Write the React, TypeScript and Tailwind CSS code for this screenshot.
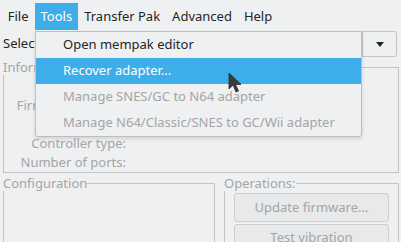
import React from "react";

const menuBar = ["File", "Tools", "Transfer Pak", "Advanced", "Help"];

const toolsMenu = [
  { label: "Open mempak editor", disabled: false, active: false },
  { label: "Recover adapter...", disabled: false, active: true },
  { label: "Manage SNES/GC to N64 adapter", disabled: true, active: false },
  { label: "Manage N64/Classic/SNES to GC/Wii adapter", disabled: true, active: false },
];

const infoRows = ["", "Firmware version:", "", "Controller type:", "Number of ports:"];

const GroupHeader = ({ title }: { title: string }) => (
  <div className="flex h-[16px] items-stretch">
    <span className="leading-[16px] text-[#a4a5a6]">{title}</span>
    <div className="mt-[8px] flex-1 border-t border-r border-[#c2c4c6]" />
  </div>
);

const Cursor = () => (
  <svg
    className="absolute left-[228px] top-[72px]"
    width="14"
    height="22"
    viewBox="0 0 14 22"
  >
    <path
      d="M1 1 L1 17 L5 13 L8 20 L10.5 19 L7.5 12.5 L13 12.5 Z"
      fill="#3a3b3c"
      stroke="#2a2b2c"
      strokeWidth="0.8"
      strokeLinejoin="round"
    />
  </svg>
);

const App = () => {
  return (
    <div className="relative h-[242px] w-[401px] overflow-hidden bg-[#eff0f1] font-['Noto_Sans',sans-serif] text-[13px] text-[#232627]">
      {/* menu bar */}
      <div className="flex h-[31px] gap-[0.5px] pl-[2px] pt-[3px]">
        {menuBar.map((m) => (
          <div
            key={m}
            className={
              m === "Tools"
                ? "flex h-[27px] items-center bg-[#3daee9] px-[5.75px] text-white"
                : "flex h-[27px] items-center px-[5.75px]"
            }
          >
            {m}
          </div>
        ))}
      </div>

      {/* adapter select */}
      <div className="flex h-[26px] items-stretch pl-[3px] pr-[4px]">
        <span className="flex items-center pr-[8px]">Select adapter:</span>
        <div className="flex-1 border-y border-l border-[#c2c4c6] bg-[#fcfcfc]" />
        <div className="flex w-[35px] items-center justify-center rounded-r-[3px] border border-[#c2c4c6] bg-[#eff0f1]">
          <div className="h-0 w-0 border-x-[4px] border-t-[5px] border-x-transparent border-t-[#232627]" />
        </div>
      </div>

      {/* information */}
      <div className="ml-[3px] mr-[2px] mt-[2px] flex flex-col">
        <GroupHeader title="Information" />
        <div className="flex flex-col border-x border-b border-[#c2c4c6] pt-[2px]">
          {infoRows.map((r, i) => (
            <div key={i} className="flex h-[19px] items-center">
              <span className="w-[122px] text-right text-[#a4a5a6]">{r}</span>
            </div>
          ))}
        </div>
      </div>

      {/* configuration + operations */}
      <div className="ml-[3px] mr-[2px] mt-[2px] flex gap-[9px]">
        <div className="flex w-[212px] flex-col">
          <GroupHeader title="Configuration" />
          <div className="h-[60px] border-x border-[#c2c4c6]" />
        </div>
        <div className="flex flex-1 flex-col">
          <GroupHeader title="Operations:" />
          <div className="flex flex-col gap-[1.5px] border-x border-[#c2c4c6] pl-[9px] pr-[9px] pt-[2px]">
            {["Update firmware...", "Test vibration"].map((b) => (
              <div
                key={b}
                className="flex h-[29px] items-center justify-center rounded-[3px] border border-[#cdcecf] bg-[#e8e9ea] text-[#a4a5a6]"
              >
                {b}
              </div>
            ))}
          </div>
        </div>
      </div>

      {/* tools popup menu */}
      <div className="absolute left-[35px] top-[31px] w-[327px] rounded-b-[3px] border border-[#bcbec0] bg-[#eff0f1] shadow-[0_2px_4px_rgba(0,0,0,0.12)]">
        {toolsMenu.map((it) => (
          <div
            key={it.label}
            className={
              it.active
                ? "flex h-[26px] items-center bg-[#3daee9] pl-[27px] text-white"
                : it.disabled
                ? "flex h-[26px] items-center pl-[27px] text-[#a4a5a6]"
                : "flex h-[26px] items-center pl-[27px] text-[#232627]"
            }
          >
            {it.label}
          </div>
        ))}
      </div>

      <Cursor />
    </div>
  );
};

export default App;
